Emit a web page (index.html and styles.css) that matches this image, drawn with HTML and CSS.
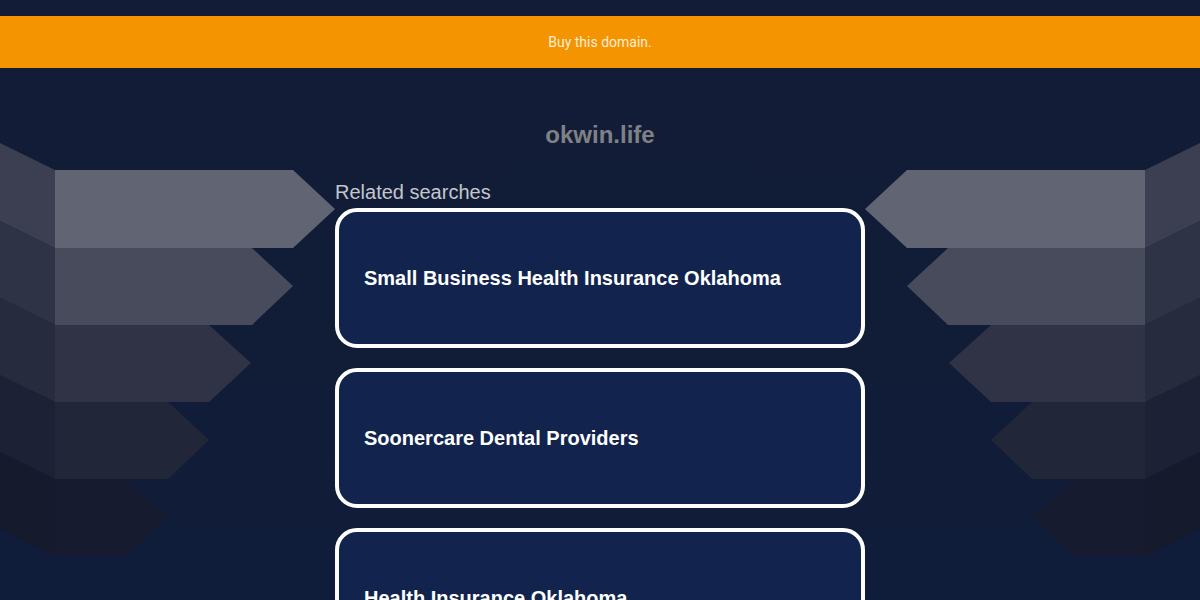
FILE: index.html
```html
<!DOCTYPE html>
<html lang="en">
<head>
<meta charset="utf-8">
<title>okwin.life</title>
<link rel="stylesheet" href="styles.css">
</head>
<body>
<div class="topstrip"></div>
<a class="banner" href="#">Buy this domain.</a>
<div class="stage">
  <svg class="deco deco-left" viewBox="0 0 340 532" width="340" height="532" aria-hidden="true">
    <polygon fill="#151a2d" points="0,384 55,411 55,488 0,461"/>
    <polygon fill="#161b2f" points="55,411 125,411 167,449 125,488 55,488"/>
    <polygon fill="#1d2135" points="0,307 55,334 55,411 0,384"/>
    <polygon fill="#222639" points="55,334 168,334 209,372 168,411 55,411"/>
    <polygon fill="#272b3e" points="0,230 55,257 55,334 0,307"/>
    <polygon fill="#2f3345" points="55,257 209,257 251,295 209,334 55,334"/>
    <polygon fill="#2f3346" points="0,153 55,180 55,257 0,230"/>
    <polygon fill="#474b5c" points="55,180 252,180 293,218 252,257 55,257"/>
    <polygon fill="#3b3f51" points="0,75 55,102 55,180 0,153"/>
    <polygon fill="#616573" points="55,102 293,102 335,141 293,180 55,180"/>
  </svg>
  <svg class="deco deco-right" viewBox="0 0 340 532" width="340" height="532" aria-hidden="true">
    <polygon fill="#151a2d" points="0,384 55,411 55,488 0,461"/>
    <polygon fill="#161b2f" points="55,411 125,411 167,449 125,488 55,488"/>
    <polygon fill="#1d2135" points="0,307 55,334 55,411 0,384"/>
    <polygon fill="#222639" points="55,334 168,334 209,372 168,411 55,411"/>
    <polygon fill="#272b3e" points="0,230 55,257 55,334 0,307"/>
    <polygon fill="#2f3345" points="55,257 209,257 251,295 209,334 55,334"/>
    <polygon fill="#2f3346" points="0,153 55,180 55,257 0,230"/>
    <polygon fill="#474b5c" points="55,180 252,180 293,218 252,257 55,257"/>
    <polygon fill="#3b3f51" points="0,75 55,102 55,180 0,153"/>
    <polygon fill="#616573" points="55,102 293,102 335,141 293,180 55,180"/>
  </svg>
  <main class="content">
    <h1 class="domain">okwin.life</h1>
    <section class="related">
      <p class="related-title">Related searches</p>
      <div class="cards">
        <a class="card" href="#">Small Business Health Insurance Oklahoma</a>
        <a class="card" href="#">Soonercare Dental Providers</a>
        <a class="card" href="#">Health Insurance Oklahoma</a>
      </div>
    </section>
  </main>
</div>
</body>
</html>
```
FILE: styles.css
```css
html, body {
  margin: 0;
  padding: 0;
}
body {
  background: linear-gradient(#121c36, #111c37 50%, #0f1d3b);
  min-height: 100vh;
  font-family: "Liberation Sans", Arial, sans-serif;
}
.topstrip {
  height: 16px;
}
.banner {
  display: block;
  height: 52px;
  line-height: 52px;
  background: #f39400;
  color: rgba(255, 255, 255, 0.85);
  text-align: center;
  font-family: Roboto, "Liberation Sans", sans-serif;
  font-size: 14px;
  text-decoration: none;
}
.stage {
  position: relative;
  padding-top: 53px;
  padding-bottom: 40px;
}
.deco {
  position: absolute;
  top: 0;
  display: block;
}
.deco-left {
  left: 0;
}
.deco-right {
  right: 0;
  transform: scaleX(-1);
}
.content {
  position: relative;
  width: 530px;
  margin: 0 auto;
}
.domain {
  margin: 0 0 31px;
  font-size: 24px;
  line-height: 28px;
  font-weight: bold;
  color: #808186;
  text-align: center;
}
.related-title {
  margin: 0 0 4px;
  font-size: 20px;
  line-height: 24px;
  color: #c3c6cd;
}
.cards {
  display: flex;
  flex-direction: column;
  gap: 20px;
}
.card {
  display: flex;
  align-items: center;
  box-sizing: border-box;
  height: 140px;
  padding: 0 25px;
  border: 4px solid #ffffff;
  border-radius: 22px;
  background: #12244e;
  color: #ffffff;
  font-size: 20px;
  font-weight: bold;
  text-decoration: none;
}
```
